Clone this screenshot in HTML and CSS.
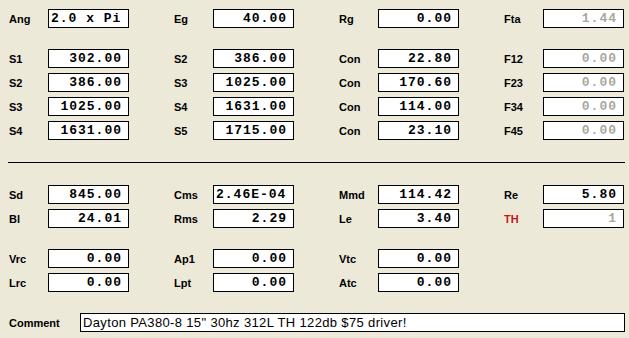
FILE: index.html
```html
<html>
  <head>
    <title>Driver Parameters</title>
    <link rel="stylesheet" href="styles.css">
  </head>
  <body>
    <div class="sheet">
      <div class="row">
        <div class="field"><label>Ang</label><span class="box left">2.0 x Pi</span></div>
        <div class="field"><label>Eg</label><span class="box">40.00</span></div>
        <div class="field"><label>Rg</label><span class="box">0.00</span></div>
        <div class="field"><label>Fta</label><span class="box off">1.44</span></div>
      </div>

      <div class="row spaced">
        <div class="field"><label>S1</label><span class="box">302.00</span></div>
        <div class="field"><label>S2</label><span class="box">386.00</span></div>
        <div class="field"><label>Con</label><span class="box">22.80</span></div>
        <div class="field"><label>F12</label><span class="box off">0.00</span></div>
      </div>
      <div class="row">
        <div class="field"><label>S2</label><span class="box">386.00</span></div>
        <div class="field"><label>S3</label><span class="box">1025.00</span></div>
        <div class="field"><label>Con</label><span class="box">170.60</span></div>
        <div class="field"><label>F23</label><span class="box off">0.00</span></div>
      </div>
      <div class="row">
        <div class="field"><label>S3</label><span class="box">1025.00</span></div>
        <div class="field"><label>S4</label><span class="box">1631.00</span></div>
        <div class="field"><label>Con</label><span class="box">114.00</span></div>
        <div class="field"><label>F34</label><span class="box off">0.00</span></div>
      </div>
      <div class="row">
        <div class="field"><label>S4</label><span class="box">1631.00</span></div>
        <div class="field"><label>S5</label><span class="box">1715.00</span></div>
        <div class="field"><label>Con</label><span class="box">23.10</span></div>
        <div class="field"><label>F45</label><span class="box off">0.00</span></div>
      </div>

      <div class="rule"></div>

      <div class="row">
        <div class="field"><label>Sd</label><span class="box">845.00</span></div>
        <div class="field"><label>Cms</label><span class="box left">2.46E-04</span></div>
        <div class="field"><label>Mmd</label><span class="box">114.42</span></div>
        <div class="field"><label>Re</label><span class="box">5.80</span></div>
      </div>
      <div class="row">
        <div class="field"><label>Bl</label><span class="box">24.01</span></div>
        <div class="field"><label>Rms</label><span class="box">2.29</span></div>
        <div class="field"><label>Le</label><span class="box">3.40</span></div>
        <div class="field"><label class="alert">TH</label><span class="box off">1</span></div>
      </div>

      <div class="row spaced">
        <div class="field"><label>Vrc</label><span class="box">0.00</span></div>
        <div class="field"><label>Ap1</label><span class="box">0.00</span></div>
        <div class="field"><label>Vtc</label><span class="box">0.00</span></div>
      </div>
      <div class="row">
        <div class="field"><label>Lrc</label><span class="box">0.00</span></div>
        <div class="field"><label>Lpt</label><span class="box">0.00</span></div>
        <div class="field"><label>Atc</label><span class="box">0.00</span></div>
      </div>

      <div class="row spaced">
        <label class="wide">Comment</label>
        <span class="box comment">Dayton PA380-8 15" 30hz 312L TH 122db $75 driver!</span>
      </div>
    </div>
  </body>
</html>
```

FILE: styles.css
```css
body {
  margin: 0;
  background-color: #ece9d8;
  color: #000000;
  font-family: "Liberation Sans", Arial, sans-serif;
}
.sheet {
  display: flex;
  flex-direction: column;
  gap: 5px;
  padding: 9px 0 0 9px;
}
.row {
  display: flex;
  align-items: center;
  height: 19px;
}
.spaced {
  margin-top: 16px;
}
.field {
  display: flex;
  flex: none;
  align-items: center;
  width: 165px;
}
.field:last-child {
  width: auto;
}
label {
  flex: none;
  width: 39px;
  font-size: 11px;
  font-weight: bold;
}
label.wide {
  width: 71px;
}
.alert {
  color: #c41818;
}
.box {
  flex: none;
  box-sizing: border-box;
  width: 81px;
  height: 19px;
  padding: 0 6px 0 2px;
  border: 1px solid #000000;
  background: #ffffff;
  font-family: "Liberation Mono", "Courier New", monospace;
  font-size: 13px;
  font-weight: bold;
  letter-spacing: 1px;
  line-height: 17px;
  text-align: right;
  white-space: nowrap;
}
.left {
  text-align: left;
}
.off {
  color: #a8a8a0;
}
.comment {
  width: 545px;
  padding-left: 2px;
  font-family: "Liberation Sans", Arial, sans-serif;
  font-size: 13px;
  font-weight: normal;
  letter-spacing: 0.35px;
  text-align: left;
}
.rule {
  width: 617px;
  height: 1px;
  margin: 17px 0 17px -1px;
  background: #000000;
}
```
